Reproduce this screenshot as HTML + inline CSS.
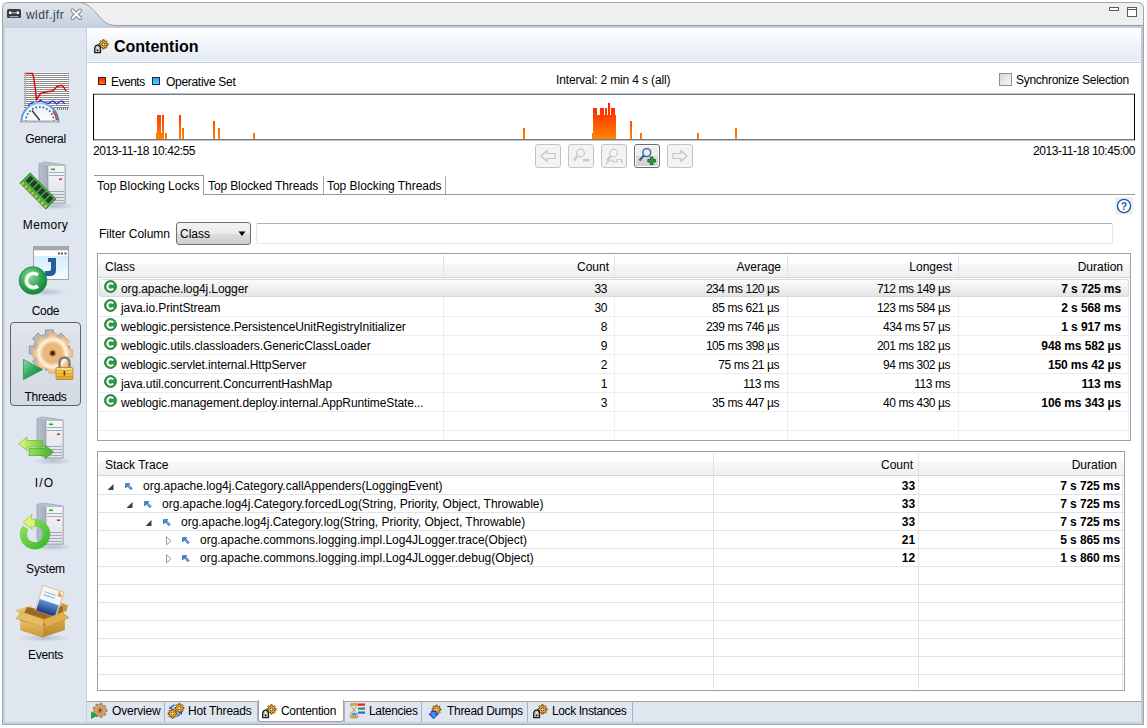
<!DOCTYPE html>
<html><head><meta charset="utf-8">
<style>
*{box-sizing:border-box}
html,body{margin:0;padding:0}
body{width:1147px;height:728px;overflow:hidden;background:#fff;position:relative;font-family:"Liberation Sans",sans-serif;font-size:12px;color:#000}
.a{position:absolute}
.t{position:absolute;white-space:nowrap;line-height:14px;font-size:12px}
.r{text-align:right}
.n{letter-spacing:-0.45px}
.b{font-weight:bold}
.hl{position:absolute;height:1px}
.vl{position:absolute;width:1px}
</style></head><body>

<!-- ============ FRAME TOP ============ -->
<svg class="a" style="left:0;top:0" width="1147" height="30">
  <defs>
    <linearGradient id="tabg" x1="0" y1="0" x2="0" y2="1">
      <stop offset="0" stop-color="#dfe6ee"/><stop offset="0.5" stop-color="#d0dae5"/><stop offset="1" stop-color="#c2cfdc"/>
    </linearGradient>
  </defs>
  <rect x="2" y="2" width="8" height="8" fill="#ececec"/><rect x="1137" y="2" width="7" height="8" fill="#ececec"/>
  <path d="M2.5,30 V9 Q2.5,2.5 9,2.5 H1137 Q1143.5,2.5 1143.5,9 V30" fill="#efefef" stroke="#a3a3a3" stroke-width="1"/>
  <path d="M3,30 V9 Q3,3 9,3 H78 C88,3 92,9 98,15 C104,22 108,25.5 116,25.5 H1143 V30 Z" fill="url(#tabg)"/>
  <path d="M78,2.5 C88,2.5 92,9 98,15 C104,22 108,25.5 116,25.5 H1143" fill="none" stroke="#9c9c9c" stroke-width="1"/>
  <rect x="3" y="26" width="1140" height="2" fill="#c3d1e1"/>
  <rect x="116" y="26" width="1027" height="2" fill="#bccbdd"/>
  <!-- cassette icon -->
  <rect x="7" y="9" width="14" height="9" rx="1.5" fill="#3b3b3b"/>
  <rect x="9" y="11.5" width="2.5" height="2.5" fill="#fff"/>
  <rect x="16.5" y="11.5" width="2.5" height="2.5" fill="#fff"/>
  <rect x="12" y="12" width="4" height="1.5" fill="#999"/>
  <rect x="9.5" y="16" width="9" height="1.2" fill="#aaa"/>
  <!-- close X -->
  <path d="M72.5,10.5 L80,18 M80,10.5 L72.5,18" stroke="#7c7c7c" stroke-width="4" stroke-linecap="round"/>
  <path d="M72.5,10.5 L80,18 M80,10.5 L72.5,18" stroke="#ffffff" stroke-width="2.2" stroke-linecap="round"/>
  <!-- min / max -->
  <rect x="1109.5" y="7.5" width="9" height="3" fill="#fff" stroke="#5a5a5a" stroke-width="1"/>
  <rect x="1127.5" y="7.5" width="9" height="9" fill="#fff" stroke="#5a5a5a" stroke-width="1"/>
  <rect x="1128" y="9" width="8" height="1" fill="#5a5a5a"/>
</svg>
<div class="t" style="left:26px;top:8px;color:#3a3f46;letter-spacing:0.45px">wldf.jfr</div>

<!-- side frame + bottom -->
<div class="a" style="left:2px;top:28px;width:1px;height:697px;background:#a3a3a3"></div>
<div class="a" style="left:1143px;top:28px;width:1px;height:697px;background:#a3a3a3"></div>
<div class="a" style="left:2px;top:724px;width:1142px;height:1px;background:#a3a3a3"></div>
<div class="a" style="left:3px;top:28px;width:2px;height:696px;background:#c3d1e1"></div>
<div class="a" style="left:1141px;top:28px;width:2px;height:696px;background:#bccbdd"></div>
<div class="a" style="left:3px;top:722px;width:1140px;height:2px;background:#c3d1e1"></div>

<!-- sidebar -->
<div class="a" style="left:5px;top:28px;width:81px;height:694px;background:#dfe6f0"></div>
<div class="a" style="left:86px;top:28px;width:1px;height:694px;background:#c3d1e1"></div>

<!-- header -->
<div class="a" style="left:87px;top:28px;width:1054px;height:33px;background:linear-gradient(#ffffff,#e3eaf3)"></div>
<div class="a" style="left:87px;top:61px;width:1054px;height:1px;background:#f4f7fa"></div>
<div class="a" style="left:87px;top:62px;width:1054px;height:1px;background:#bfcfe0"></div>
<div class="t b" style="left:114px;top:38px;font-size:16px;line-height:18px;letter-spacing:0px">Contention</div>

<svg class="a" style="left:93px;top:38px" width="16" height="16" viewBox="0 0 16 16">
<path d="M13.70,5.58 L15.14,5.66 L15.14,7.14 L13.70,7.22 L13.34,8.08 L14.30,9.16 L13.26,10.20 L12.18,9.24 L11.32,9.60 L11.24,11.04 L9.76,11.04 L9.68,9.60 L8.82,9.24 L7.74,10.20 L6.70,9.16 L7.66,8.08 L7.30,7.22 L5.86,7.14 L5.86,5.66 L7.30,5.58 L7.66,4.72 L6.70,3.64 L7.74,2.60 L8.82,3.56 L9.68,3.20 L9.76,1.76 L11.24,1.76 L11.32,3.20 L12.18,3.56 L13.26,2.60 L14.30,3.64 L13.34,4.72 Z" fill="#f6b81e" stroke="#6a3c12" stroke-width="0.9"/>
<circle cx="10.5" cy="6.4" r="1.5" fill="#fff" stroke="#3a2a1a" stroke-width="0.9"/>
<path d="M1.7,14.6 V11 Q1.7,7.2 4.6,7.2 Q7.5,7.2 7.5,11 V14.6 Z" fill="#c4c4c4" stroke="#1e1e1e" stroke-width="1.3"/>
<path d="M4.6,8.6 L5.6,10.4 H3.6 Z" fill="#fff"/>
<circle cx="4.6" cy="12.3" r="0.9" fill="#111"/>
</svg>
<div class="a" style="left:98px;top:77px;width:8px;height:8px;background:linear-gradient(#ff2200,#ff7a00);border:1px solid #3a1a10"></div>
<div class="t " style="left:111px;top:75px;letter-spacing:-0.5px">Events</div>
<div class="a" style="left:152px;top:77px;width:8px;height:8px;background:linear-gradient(#3aa0ff,#40d8ff);border:1px solid #1a2a40"></div>
<div class="t " style="left:166px;top:75px;letter-spacing:-0.3px">Operative Set</div>
<div class="t " style="left:556px;top:73px;letter-spacing:-0.15px">Interval: 2 min 4 s (all)</div>
<div class="a" style="left:999px;top:73px;width:13px;height:13px;border:1px solid #8f8f8f;background:linear-gradient(135deg,#d4d8de,#f6f6f6)"></div>
<div class="t " style="left:1016px;top:73px;letter-spacing:-0.28px">Synchronize Selection</div>
<div class="a" style="left:93px;top:94px;width:1042px;height:46px;background:#fff"></div>
<div class="a" style="left:93px;top:93px;width:1042px;height:1px;background:#b4c0cd"></div>
<div class="a" style="left:93px;top:94px;width:1042px;height:1px;background:#7a7a7a"></div>
<div class="a" style="left:93px;top:94px;width:1px;height:46px;background:#000"></div>
<div class="a" style="left:1134px;top:94px;width:1px;height:46px;background:#000"></div>
<div class="a" style="left:0;top:0;width:1147px;height:728px">
<div class="a" style="left:156px;top:133px;width:8px;height:6px;background:linear-gradient(to bottom,#ff1a00 0px,#ff8400 36px);background-size:100% 36px;background-position:0 -30px"></div>
<div class="a" style="left:157px;top:115px;width:4px;height:24px;background:linear-gradient(to bottom,#ff1a00 0px,#ff8400 36px);background-size:100% 36px;background-position:0 -12px"></div>
<div class="a" style="left:162px;top:115px;width:2px;height:24px;background:linear-gradient(to bottom,#ff1a00 0px,#ff8400 36px);background-size:100% 36px;background-position:0 -12px"></div>
<div class="a" style="left:165px;top:133px;width:2px;height:6px;background:linear-gradient(to bottom,#ff1a00 0px,#ff8400 36px);background-size:100% 36px;background-position:0 -30px"></div>
<div class="a" style="left:179px;top:115px;width:2px;height:24px;background:linear-gradient(to bottom,#ff1a00 0px,#ff8400 36px);background-size:100% 36px;background-position:0 -12px"></div>
<div class="a" style="left:182px;top:128px;width:2px;height:11px;background:linear-gradient(to bottom,#ff1a00 0px,#ff8400 36px);background-size:100% 36px;background-position:0 -25px"></div>
<div class="a" style="left:213px;top:121px;width:2px;height:18px;background:linear-gradient(to bottom,#ff1a00 0px,#ff8400 36px);background-size:100% 36px;background-position:0 -18px"></div>
<div class="a" style="left:218px;top:128px;width:2px;height:11px;background:linear-gradient(to bottom,#ff1a00 0px,#ff8400 36px);background-size:100% 36px;background-position:0 -25px"></div>
<div class="a" style="left:253px;top:133px;width:2px;height:6px;background:linear-gradient(to bottom,#ff1a00 0px,#ff8400 36px);background-size:100% 36px;background-position:0 -30px"></div>
<div class="a" style="left:523px;top:128px;width:2px;height:11px;background:linear-gradient(to bottom,#ff1a00 0px,#ff8400 36px);background-size:100% 36px;background-position:0 -25px"></div>
<div class="a" style="left:592px;top:133px;width:1px;height:6px;background:linear-gradient(to bottom,#ff1a00 0px,#ff8400 36px);background-size:100% 36px;background-position:0 -30px"></div>
<div class="a" style="left:593px;top:115px;width:23px;height:24px;background:linear-gradient(to bottom,#ff1a00 0px,#ff8400 36px);background-size:100% 36px;background-position:0 -12px"></div>
<div class="a" style="left:593px;top:108px;width:4px;height:31px;background:linear-gradient(to bottom,#ff1a00 0px,#ff8400 36px);background-size:100% 36px;background-position:0 -5px"></div>
<div class="a" style="left:600px;top:108px;width:4px;height:31px;background:linear-gradient(to bottom,#ff1a00 0px,#ff8400 36px);background-size:100% 36px;background-position:0 -5px"></div>
<div class="a" style="left:605px;top:108px;width:2px;height:31px;background:linear-gradient(to bottom,#ff1a00 0px,#ff8400 36px);background-size:100% 36px;background-position:0 -5px"></div>
<div class="a" style="left:608px;top:103px;width:2px;height:36px;background:linear-gradient(to bottom,#ff1a00 0px,#ff8400 36px);background-size:100% 36px;background-position:0 0px"></div>
<div class="a" style="left:611px;top:108px;width:4px;height:31px;background:linear-gradient(to bottom,#ff1a00 0px,#ff8400 36px);background-size:100% 36px;background-position:0 -5px"></div>
<div class="a" style="left:630px;top:121px;width:2px;height:18px;background:linear-gradient(to bottom,#ff1a00 0px,#ff8400 36px);background-size:100% 36px;background-position:0 -18px"></div>
<div class="a" style="left:640px;top:133px;width:2px;height:6px;background:linear-gradient(to bottom,#ff1a00 0px,#ff8400 36px);background-size:100% 36px;background-position:0 -30px"></div>
<div class="a" style="left:697px;top:133px;width:2px;height:6px;background:linear-gradient(to bottom,#ff1a00 0px,#ff8400 36px);background-size:100% 36px;background-position:0 -30px"></div>
<div class="a" style="left:735px;top:128px;width:2px;height:11px;background:linear-gradient(to bottom,#ff1a00 0px,#ff8400 36px);background-size:100% 36px;background-position:0 -25px"></div>
</div>
<div class="a" style="left:94px;top:139px;width:1040px;height:1px;background:#7a7a7a"></div>
<div class="a" style="left:93px;top:140px;width:1042px;height:1px;background:#b9c2cc"></div>
<div class="t " style="left:93px;top:144px;letter-spacing:-0.45px">2013-11-18 10:42:55</div>
<div class="t r " style="left:735px;width:400px;top:144px;letter-spacing:-0.45px">2013-11-18 10:45:00</div>
<div class="a" style="left:535px;top:144px;width:26px;height:24px;border:1px solid #bfc4ca;border-radius:3px;background:#f3f3f3"></div>
<div class="a" style="left:568px;top:144px;width:26px;height:24px;border:1px solid #bfc4ca;border-radius:3px;background:#f3f3f3"></div>
<div class="a" style="left:601px;top:144px;width:26px;height:24px;border:1px solid #bfc4ca;border-radius:3px;background:#f3f3f3"></div>
<div class="a" style="left:634px;top:144px;width:26px;height:24px;border:1px solid #6b6b6b;border-radius:3px;background:linear-gradient(#f2f2f2 0,#ebebeb 50%,#d9d9d9 51%,#d0d0d0 100%);box-shadow:inset 0 0 0 1px #fff"></div>
<div class="a" style="left:667px;top:144px;width:26px;height:24px;border:1px solid #bfc4ca;border-radius:3px;background:#f3f3f3"></div>
<svg class="a" style="left:535px;top:144px" width="160" height="24">
<path d="M6,12 L12,6.5 V9.5 H20 V14.5 H12 V17.5 Z" fill="none" stroke="#c4c4c4" stroke-width="1.2"/>
<g transform="translate(33,0)"><circle cx="12.6" cy="9" r="3.8" fill="none" stroke="#c8c8c8" stroke-width="1.2"/><path d="M9.8,11.8 L6,16.5" stroke="#c8c8c8" stroke-width="2.2"/><rect x="15" y="15" width="6.5" height="2.5" fill="#c8c8c8"/></g>
<g transform="translate(66,0)"><circle cx="12.6" cy="9" r="3.8" fill="none" stroke="#c8c8c8" stroke-width="1.2"/><path d="M9.8,11.8 L6,16.5" stroke="#c8c8c8" stroke-width="2.2"/><path d="M5,20 L9,16 H12 V18 H16 V15.5 H20.5 V17.5 L22,19" fill="none" stroke="#c8c8c8" stroke-width="1.2"/></g>
<g transform="translate(99,0)"><circle cx="12.8" cy="8.6" r="4" fill="#e4eefa" stroke="#3a5f96" stroke-width="1.4"/><path d="M9.8,11.6 L5.5,16.5" stroke="#3a5f96" stroke-width="2.2"/><path d="M16.3,13 H19 V15.5 H21.5 V18 H19 V20.5 H16.3 V18 H13.8 V15.5 H16.3 Z" fill="#2aa038" stroke="#0e5a18" stroke-width="0.8"/></g>
<g transform="translate(132,0)"><path d="M20,12 L14,6.5 V9.5 H6 V14.5 H14 V17.5 Z" fill="none" stroke="#c4c4c4" stroke-width="1.2"/></g>
</svg>
<div class="a" style="left:94px;top:175px;width:109px;height:1px;background:#9a9a9a"></div>
<div class="a" style="left:203px;top:175px;width:1px;height:20px;background:#9a9a9a"></div>
<div class="a" style="left:93px;top:176px;width:110px;height:19px;background:#fff"></div>
<div class="a" style="left:323px;top:176px;width:1px;height:18px;background:#a8a8a8"></div>
<div class="a" style="left:445px;top:176px;width:1px;height:18px;background:#a8a8a8"></div>
<div class="a" style="left:203px;top:194px;width:932px;height:1px;background:#9a9a9a"></div>
<div class="t " style="left:97px;top:179px;letter-spacing:-0.02px">Top Blocking Locks</div>
<div class="t " style="left:208px;top:179px;letter-spacing:-0.12px">Top Blocked Threads</div>
<div class="t " style="left:327px;top:179px;letter-spacing:-0.03px">Top Blocking Threads</div>
<div class="a" style="left:1115px;top:197px;width:18px;height:18px;background:#efefef"></div>
<svg class="a" style="left:1115px;top:197px" width="18" height="18"><circle cx="9" cy="9" r="6.6" fill="#fff" stroke="#1f5aa0" stroke-width="1.4"/>
<text x="9" y="13" text-anchor="middle" font-family="Liberation Sans" font-weight="bold" font-size="10.5" fill="#1f5aa0">?</text></svg>
<div class="t " style="left:99px;top:227px;letter-spacing:-0.03px">Filter Column</div>
<div class="a" style="left:176px;top:222px;width:75px;height:23px;border:1px solid #707070;border-radius:3px;background:linear-gradient(#f3f3f3 0,#ebebeb 50%,#dddddd 51%,#cfcfcf 100%)"></div>
<div class="t " style="left:180px;top:227px;">Class</div>
<svg class="a" style="left:236px;top:230px" width="12" height="8"><path d="M2.5,1.5 H9.5 L6,6 Z" fill="#000"/></svg>
<div class="a" style="left:256px;top:223px;width:857px;height:21px;border:1px solid #e2e8ef;border-top-color:#a9b1b9;border-radius:2px;background:#fff"></div>
<div class="a" style="left:97px;top:253px;width:1034px;height:188px;border:1px solid #9aa1a9;background:#fff"></div>
<div class="a" style="left:98px;top:254px;width:1032px;height:23px;background:linear-gradient(#ffffff 0,#ffffff 40%,#f6f7f8 45%,#eef0f2 100%)"></div>
<div class="a" style="left:98px;top:277px;width:1032px;height:1px;background:#d5d5d5"></div>
<div class="a" style="left:443px;top:255px;width:1px;height:21px;background:#e2e3e4"></div>
<div class="a" style="left:443px;top:278px;width:1px;height:161px;background:#ebeff4"></div>
<div class="a" style="left:614px;top:255px;width:1px;height:21px;background:#e2e3e4"></div>
<div class="a" style="left:614px;top:278px;width:1px;height:161px;background:#ebeff4"></div>
<div class="a" style="left:787px;top:255px;width:1px;height:21px;background:#e2e3e4"></div>
<div class="a" style="left:787px;top:278px;width:1px;height:161px;background:#ebeff4"></div>
<div class="a" style="left:958px;top:255px;width:1px;height:21px;background:#e2e3e4"></div>
<div class="a" style="left:958px;top:278px;width:1px;height:161px;background:#ebeff4"></div>
<div class="a" style="left:1128px;top:278px;width:1px;height:161px;background:#ebeff4"></div>
<div class="a" style="left:98px;top:316px;width:1032px;height:1px;background:#ededed"></div>
<div class="a" style="left:98px;top:335px;width:1032px;height:1px;background:#ededed"></div>
<div class="a" style="left:98px;top:354px;width:1032px;height:1px;background:#ededed"></div>
<div class="a" style="left:98px;top:373px;width:1032px;height:1px;background:#ededed"></div>
<div class="a" style="left:98px;top:392px;width:1032px;height:1px;background:#ededed"></div>
<div class="a" style="left:98px;top:411px;width:1032px;height:1px;background:#ededed"></div>
<div class="a" style="left:98px;top:430px;width:1032px;height:1px;background:#ededed"></div>
<div class="a" style="left:99px;top:279px;width:1030px;height:18px;border:1px solid #d9d9d9;border-radius:3px;background:linear-gradient(#fbfbfb,#e5e5e5)"></div>
<div class="t " style="left:105px;top:260px;">Class</div>
<div class="t r " style="left:209px;width:400px;top:260px;">Count</div>
<div class="t r " style="left:381px;width:400px;top:260px;">Average</div>
<div class="t r " style="left:552px;width:400px;top:260px;">Longest</div>
<div class="t r " style="left:723px;width:400px;top:260px;">Duration</div>
<svg class="a" style="left:104px;top:280px" width="13" height="13"><circle cx="6.5" cy="6.5" r="6" fill="#2e9a48" stroke="#1d6e32" stroke-width="0.8"/>
<path d="M9.2,4.3 A3.3,3.3 0 1 0 9.2,8.7" fill="none" stroke="#fff" stroke-width="2"/></svg>
<div class="t " style="left:121px;top:282px;letter-spacing:-0.1px">org.apache.log4j.Logger</div>
<div class="t r n" style="left:207px;width:400px;top:282px;">33</div>
<div class="t r n" style="left:379px;width:400px;top:282px;">234 ms 120 µs</div>
<div class="t r n" style="left:550px;width:400px;top:282px;">712 ms 149 µs</div>
<div class="t r b" style="left:721px;width:400px;top:282px;letter-spacing:-0.1px">7 s 725 ms</div>
<svg class="a" style="left:104px;top:299px" width="13" height="13"><circle cx="6.5" cy="6.5" r="6" fill="#2e9a48" stroke="#1d6e32" stroke-width="0.8"/>
<path d="M9.2,4.3 A3.3,3.3 0 1 0 9.2,8.7" fill="none" stroke="#fff" stroke-width="2"/></svg>
<div class="t " style="left:121px;top:301px;letter-spacing:-0.1px">java.io.PrintStream</div>
<div class="t r n" style="left:207px;width:400px;top:301px;">30</div>
<div class="t r n" style="left:379px;width:400px;top:301px;">85 ms 621 µs</div>
<div class="t r n" style="left:550px;width:400px;top:301px;">123 ms 584 µs</div>
<div class="t r b" style="left:721px;width:400px;top:301px;letter-spacing:-0.1px">2 s 568 ms</div>
<svg class="a" style="left:104px;top:318px" width="13" height="13"><circle cx="6.5" cy="6.5" r="6" fill="#2e9a48" stroke="#1d6e32" stroke-width="0.8"/>
<path d="M9.2,4.3 A3.3,3.3 0 1 0 9.2,8.7" fill="none" stroke="#fff" stroke-width="2"/></svg>
<div class="t " style="left:121px;top:320px;letter-spacing:-0.1px">weblogic.persistence.PersistenceUnitRegistryInitializer</div>
<div class="t r n" style="left:207px;width:400px;top:320px;">8</div>
<div class="t r n" style="left:379px;width:400px;top:320px;">239 ms 746 µs</div>
<div class="t r n" style="left:550px;width:400px;top:320px;">434 ms 57 µs</div>
<div class="t r b" style="left:721px;width:400px;top:320px;letter-spacing:-0.1px">1 s 917 ms</div>
<svg class="a" style="left:104px;top:337px" width="13" height="13"><circle cx="6.5" cy="6.5" r="6" fill="#2e9a48" stroke="#1d6e32" stroke-width="0.8"/>
<path d="M9.2,4.3 A3.3,3.3 0 1 0 9.2,8.7" fill="none" stroke="#fff" stroke-width="2"/></svg>
<div class="t " style="left:121px;top:339px;letter-spacing:-0.1px">weblogic.utils.classloaders.GenericClassLoader</div>
<div class="t r n" style="left:207px;width:400px;top:339px;">9</div>
<div class="t r n" style="left:379px;width:400px;top:339px;">105 ms 398 µs</div>
<div class="t r n" style="left:550px;width:400px;top:339px;">201 ms 182 µs</div>
<div class="t r b" style="left:721px;width:400px;top:339px;letter-spacing:-0.1px">948 ms 582 µs</div>
<svg class="a" style="left:104px;top:356px" width="13" height="13"><circle cx="6.5" cy="6.5" r="6" fill="#2e9a48" stroke="#1d6e32" stroke-width="0.8"/>
<path d="M9.2,4.3 A3.3,3.3 0 1 0 9.2,8.7" fill="none" stroke="#fff" stroke-width="2"/></svg>
<div class="t " style="left:121px;top:358px;letter-spacing:-0.1px">weblogic.servlet.internal.HttpServer</div>
<div class="t r n" style="left:207px;width:400px;top:358px;">2</div>
<div class="t r n" style="left:379px;width:400px;top:358px;">75 ms 21 µs</div>
<div class="t r n" style="left:550px;width:400px;top:358px;">94 ms 302 µs</div>
<div class="t r b" style="left:721px;width:400px;top:358px;letter-spacing:-0.1px">150 ms 42 µs</div>
<svg class="a" style="left:104px;top:375px" width="13" height="13"><circle cx="6.5" cy="6.5" r="6" fill="#2e9a48" stroke="#1d6e32" stroke-width="0.8"/>
<path d="M9.2,4.3 A3.3,3.3 0 1 0 9.2,8.7" fill="none" stroke="#fff" stroke-width="2"/></svg>
<div class="t " style="left:121px;top:377px;letter-spacing:-0.1px">java.util.concurrent.ConcurrentHashMap</div>
<div class="t r n" style="left:207px;width:400px;top:377px;">1</div>
<div class="t r n" style="left:379px;width:400px;top:377px;">113 ms</div>
<div class="t r n" style="left:550px;width:400px;top:377px;">113 ms</div>
<div class="t r b" style="left:721px;width:400px;top:377px;letter-spacing:-0.1px">113 ms</div>
<svg class="a" style="left:104px;top:394px" width="13" height="13"><circle cx="6.5" cy="6.5" r="6" fill="#2e9a48" stroke="#1d6e32" stroke-width="0.8"/>
<path d="M9.2,4.3 A3.3,3.3 0 1 0 9.2,8.7" fill="none" stroke="#fff" stroke-width="2"/></svg>
<div class="t " style="left:121px;top:396px;letter-spacing:-0.1px">weblogic.management.deploy.internal.AppRuntimeState...</div>
<div class="t r n" style="left:207px;width:400px;top:396px;">3</div>
<div class="t r n" style="left:379px;width:400px;top:396px;">35 ms 447 µs</div>
<div class="t r n" style="left:550px;width:400px;top:396px;">40 ms 430 µs</div>
<div class="t r b" style="left:721px;width:400px;top:396px;letter-spacing:-0.1px">106 ms 343 µs</div>
<div class="a" style="left:97px;top:451px;width:1028px;height:240px;border:1px solid #9aa1a9;background:#fff"></div>
<div class="a" style="left:98px;top:452px;width:1026px;height:23px;background:linear-gradient(#ffffff 0,#ffffff 40%,#f6f7f8 45%,#eef0f2 100%)"></div>
<div class="a" style="left:98px;top:475px;width:1026px;height:1px;background:#d5d5d5"></div>
<div class="a" style="left:713px;top:453px;width:1px;height:21px;background:#e2e3e4"></div>
<div class="a" style="left:713px;top:476px;width:1px;height:213px;background:#e3e3e3"></div>
<div class="a" style="left:918px;top:453px;width:1px;height:21px;background:#e2e3e4"></div>
<div class="a" style="left:918px;top:476px;width:1px;height:213px;background:#e3e3e3"></div>
<div class="a" style="left:1122px;top:476px;width:1px;height:213px;background:#e3e3e3"></div>
<div class="a" style="left:98px;top:494px;width:1026px;height:1px;background:#e3e3e3"></div>
<div class="a" style="left:98px;top:512px;width:1026px;height:1px;background:#e3e3e3"></div>
<div class="a" style="left:98px;top:530px;width:1026px;height:1px;background:#e3e3e3"></div>
<div class="a" style="left:98px;top:548px;width:1026px;height:1px;background:#e3e3e3"></div>
<div class="a" style="left:98px;top:566px;width:1026px;height:1px;background:#e3e3e3"></div>
<div class="a" style="left:98px;top:584px;width:1026px;height:1px;background:#e3e3e3"></div>
<div class="a" style="left:98px;top:602px;width:1026px;height:1px;background:#e3e3e3"></div>
<div class="a" style="left:98px;top:620px;width:1026px;height:1px;background:#e3e3e3"></div>
<div class="a" style="left:98px;top:638px;width:1026px;height:1px;background:#e3e3e3"></div>
<div class="a" style="left:98px;top:656px;width:1026px;height:1px;background:#e3e3e3"></div>
<div class="a" style="left:98px;top:674px;width:1026px;height:1px;background:#e3e3e3"></div>
<div class="t " style="left:105px;top:458px;">Stack Trace</div>
<div class="t r " style="left:513px;width:400px;top:458px;">Count</div>
<div class="t r " style="left:717px;width:400px;top:458px;">Duration</div>
<svg class="a" style="left:107px;top:483px" width="8" height="8"><path d="M6.5,1 V7 H0.5 Z" fill="#404040"/></svg>
<svg class="a" style="left:124px;top:482px" width="10" height="10"><path d="M1.5,1.5 H6 L4.7,2.8 L8.3,6.4 L6.9,7.8 L3.3,4.2 L1.5,6 Z" fill="#3f86cf" stroke="#1d5aa0" stroke-width="0.6"/><path d="M4.3,3.9 L7,6.6" stroke="#d0e2f4" stroke-width="0.8"/></svg>
<div class="t " style="left:143px;top:479px;letter-spacing:-0.02px">org.apache.log4j.Category.callAppenders(LoggingEvent)</div>
<div class="t r b" style="left:515px;width:400px;top:479px;letter-spacing:-0.1px">33</div>
<div class="t r b" style="left:720px;width:400px;top:479px;letter-spacing:-0.1px">7 s 725 ms</div>
<svg class="a" style="left:126px;top:501px" width="8" height="8"><path d="M6.5,1 V7 H0.5 Z" fill="#404040"/></svg>
<svg class="a" style="left:143px;top:500px" width="10" height="10"><path d="M1.5,1.5 H6 L4.7,2.8 L8.3,6.4 L6.9,7.8 L3.3,4.2 L1.5,6 Z" fill="#3f86cf" stroke="#1d5aa0" stroke-width="0.6"/><path d="M4.3,3.9 L7,6.6" stroke="#d0e2f4" stroke-width="0.8"/></svg>
<div class="t " style="left:162px;top:497px;letter-spacing:-0.02px">org.apache.log4j.Category.forcedLog(String, Priority, Object, Throwable)</div>
<div class="t r b" style="left:515px;width:400px;top:497px;letter-spacing:-0.1px">33</div>
<div class="t r b" style="left:720px;width:400px;top:497px;letter-spacing:-0.1px">7 s 725 ms</div>
<svg class="a" style="left:145px;top:519px" width="8" height="8"><path d="M6.5,1 V7 H0.5 Z" fill="#404040"/></svg>
<svg class="a" style="left:162px;top:518px" width="10" height="10"><path d="M1.5,1.5 H6 L4.7,2.8 L8.3,6.4 L6.9,7.8 L3.3,4.2 L1.5,6 Z" fill="#3f86cf" stroke="#1d5aa0" stroke-width="0.6"/><path d="M4.3,3.9 L7,6.6" stroke="#d0e2f4" stroke-width="0.8"/></svg>
<div class="t " style="left:181px;top:515px;letter-spacing:-0.02px">org.apache.log4j.Category.log(String, Priority, Object, Throwable)</div>
<div class="t r b" style="left:515px;width:400px;top:515px;letter-spacing:-0.1px">33</div>
<div class="t r b" style="left:720px;width:400px;top:515px;letter-spacing:-0.1px">7 s 725 ms</div>
<svg class="a" style="left:164px;top:535px" width="10" height="11"><path d="M2.5,1.8 L7,5.8 L2.5,9.8 Z" fill="none" stroke="#9a9a9a" stroke-width="1"/></svg>
<svg class="a" style="left:181px;top:536px" width="10" height="10"><path d="M1.5,1.5 H6 L4.7,2.8 L8.3,6.4 L6.9,7.8 L3.3,4.2 L1.5,6 Z" fill="#3f86cf" stroke="#1d5aa0" stroke-width="0.6"/><path d="M4.3,3.9 L7,6.6" stroke="#d0e2f4" stroke-width="0.8"/></svg>
<div class="t " style="left:200px;top:533px;letter-spacing:-0.02px">org.apache.commons.logging.impl.Log4JLogger.trace(Object)</div>
<div class="t r b" style="left:515px;width:400px;top:533px;letter-spacing:-0.1px">21</div>
<div class="t r b" style="left:720px;width:400px;top:533px;letter-spacing:-0.1px">5 s 865 ms</div>
<svg class="a" style="left:164px;top:553px" width="10" height="11"><path d="M2.5,1.8 L7,5.8 L2.5,9.8 Z" fill="none" stroke="#9a9a9a" stroke-width="1"/></svg>
<svg class="a" style="left:181px;top:554px" width="10" height="10"><path d="M1.5,1.5 H6 L4.7,2.8 L8.3,6.4 L6.9,7.8 L3.3,4.2 L1.5,6 Z" fill="#3f86cf" stroke="#1d5aa0" stroke-width="0.6"/><path d="M4.3,3.9 L7,6.6" stroke="#d0e2f4" stroke-width="0.8"/></svg>
<div class="t " style="left:200px;top:551px;letter-spacing:-0.02px">org.apache.commons.logging.impl.Log4JLogger.debug(Object)</div>
<div class="t r b" style="left:515px;width:400px;top:551px;letter-spacing:-0.1px">12</div>
<div class="t r b" style="left:720px;width:400px;top:551px;letter-spacing:-0.1px">1 s 860 ms</div>
<div class="a" style="left:87px;top:701px;width:1054px;height:1px;background:#a3a3a3"></div>
<div class="a" style="left:87px;top:702px;width:1054px;height:20px;background:#dfe6f0"></div>
<div class="a" style="left:164px;top:701px;width:1px;height:21px;background:#a9b3be"></div>
<div class="a" style="left:257px;top:701px;width:1px;height:21px;background:#a9b3be"></div>
<div class="a" style="left:344px;top:701px;width:1px;height:21px;background:#a9b3be"></div>
<div class="a" style="left:421px;top:701px;width:1px;height:21px;background:#a9b3be"></div>
<div class="a" style="left:527px;top:701px;width:1px;height:21px;background:#a9b3be"></div>
<div class="a" style="left:632px;top:701px;width:1px;height:21px;background:#a9b3be"></div>
<div class="a" style="left:258px;top:700px;width:86px;height:22px;background:#fff;border:1px solid #a3a3a3;border-top:none;border-radius:0 0 3px 3px"></div>
<div class="t " style="left:112px;top:704px;letter-spacing:-0.2px">Overview</div>
<div class="t " style="left:188px;top:704px;letter-spacing:-0.2px">Hot Threads</div>
<div class="t " style="left:281px;top:704px;letter-spacing:-0.3px">Contention</div>
<div class="t " style="left:369px;top:704px;letter-spacing:-0.3px">Latencies</div>
<div class="t " style="left:447px;top:704px;letter-spacing:-0.3px">Thread Dumps</div>
<div class="t " style="left:552px;top:704px;letter-spacing:-0.4px">Lock Instances</div>
<svg class="a" style="left:261px;top:703px" width="16" height="16" viewBox="0 0 16 16">
<path d="M13.70,5.58 L15.14,5.66 L15.14,7.14 L13.70,7.22 L13.34,8.08 L14.30,9.16 L13.26,10.20 L12.18,9.24 L11.32,9.60 L11.24,11.04 L9.76,11.04 L9.68,9.60 L8.82,9.24 L7.74,10.20 L6.70,9.16 L7.66,8.08 L7.30,7.22 L5.86,7.14 L5.86,5.66 L7.30,5.58 L7.66,4.72 L6.70,3.64 L7.74,2.60 L8.82,3.56 L9.68,3.20 L9.76,1.76 L11.24,1.76 L11.32,3.20 L12.18,3.56 L13.26,2.60 L14.30,3.64 L13.34,4.72 Z" fill="#f6b81e" stroke="#6a3c12" stroke-width="0.9"/>
<circle cx="10.5" cy="6.4" r="1.5" fill="#fff" stroke="#3a2a1a" stroke-width="0.9"/>
<path d="M1.7,14.6 V11 Q1.7,7.2 4.6,7.2 Q7.5,7.2 7.5,11 V14.6 Z" fill="#c4c4c4" stroke="#1e1e1e" stroke-width="1.3"/>
<path d="M4.6,8.6 L5.6,10.4 H3.6 Z" fill="#fff"/>
<circle cx="4.6" cy="12.3" r="0.9" fill="#111"/>
</svg>
<svg class="a" style="left:532px;top:703px" width="16" height="16" viewBox="0 0 16 16">
<path d="M13.70,5.58 L15.14,5.66 L15.14,7.14 L13.70,7.22 L13.34,8.08 L14.30,9.16 L13.26,10.20 L12.18,9.24 L11.32,9.60 L11.24,11.04 L9.76,11.04 L9.68,9.60 L8.82,9.24 L7.74,10.20 L6.70,9.16 L7.66,8.08 L7.30,7.22 L5.86,7.14 L5.86,5.66 L7.30,5.58 L7.66,4.72 L6.70,3.64 L7.74,2.60 L8.82,3.56 L9.68,3.20 L9.76,1.76 L11.24,1.76 L11.32,3.20 L12.18,3.56 L13.26,2.60 L14.30,3.64 L13.34,4.72 Z" fill="#f6b81e" stroke="#6a3c12" stroke-width="0.9"/>
<circle cx="10.5" cy="6.4" r="1.5" fill="#fff" stroke="#3a2a1a" stroke-width="0.9"/>
<path d="M1.7,14.6 V11 Q1.7,7.2 4.6,7.2 Q7.5,7.2 7.5,11 V14.6 Z" fill="#c4c4c4" stroke="#1e1e1e" stroke-width="1.3"/>
<path d="M4.6,8.6 L5.6,10.4 H3.6 Z" fill="#fff"/>
<circle cx="4.6" cy="12.3" r="0.9" fill="#111"/>
</svg>
<svg class="a" style="left:0;top:696px" width="460" height="28" viewBox="0 696 460 28"><path d="M105.27,709.20 L106.93,709.43 L106.93,711.37 L105.27,711.60 L104.80,712.87 L105.94,714.11 L104.68,715.60 L103.26,714.70 L102.09,715.38 L102.16,717.06 L100.24,717.40 L99.74,715.79 L98.40,715.56 L97.38,716.89 L95.69,715.92 L96.33,714.36 L95.46,713.33 L93.82,713.69 L93.15,711.86 L94.64,711.08 L94.64,709.72 L93.15,708.94 L93.82,707.11 L95.46,707.47 L96.33,706.44 L95.69,704.88 L97.38,703.91 L98.40,705.24 L99.74,705.01 L100.24,703.40 L102.16,703.74 L102.09,705.42 L103.26,706.10 L104.68,705.20 L105.94,706.69 L104.80,707.93 Z" fill="#e0a868" stroke="#8a6a50" stroke-width="0.9"/><circle cx="100" cy="710.4" r="3.2" fill="#c88848"/><circle cx="100" cy="710.4" r="1" fill="#3a2a1a"/><path d="M91,711.5 V719 L98.2,715.3 Z" fill="#2aa048"/><path d="M175.80,712.78 L177.14,712.88 L177.14,714.32 L175.80,714.42 L175.44,715.28 L176.32,716.30 L175.30,717.32 L174.28,716.44 L173.42,716.80 L173.32,718.14 L171.88,718.14 L171.78,716.80 L170.92,716.44 L169.90,717.32 L168.88,716.30 L169.76,715.28 L169.40,714.42 L168.06,714.32 L168.06,712.88 L169.40,712.78 L169.76,711.92 L168.88,710.90 L169.90,709.88 L170.92,710.76 L171.78,710.40 L171.88,709.06 L173.32,709.06 L173.42,710.40 L174.28,710.76 L175.30,709.88 L176.32,710.90 L175.44,711.92 Z" fill="#f6b81e" stroke="#6a3c12" stroke-width="0.9"/><circle cx="172.6" cy="713.6" r="1.52" fill="#fff" stroke="#6a3c12" stroke-width="0.8"/><path d="M182.60,707.38 L183.94,707.48 L183.94,708.92 L182.60,709.02 L182.24,709.88 L183.12,710.90 L182.10,711.92 L181.08,711.04 L180.22,711.40 L180.12,712.74 L178.68,712.74 L178.58,711.40 L177.72,711.04 L176.70,711.92 L175.68,710.90 L176.56,709.88 L176.20,709.02 L174.86,708.92 L174.86,707.48 L176.20,707.38 L176.56,706.52 L175.68,705.50 L176.70,704.48 L177.72,705.36 L178.58,705.00 L178.68,703.66 L180.12,703.66 L180.22,705.00 L181.08,705.36 L182.10,704.48 L183.12,705.50 L182.24,706.52 Z" fill="#f6b81e" stroke="#6a3c12" stroke-width="0.9"/><circle cx="179.4" cy="708.2" r="1.52" fill="#fff" stroke="#6a3c12" stroke-width="0.8"/><path d="M174.5,704.5 L171,707.5" stroke="#1a5ab0" stroke-width="1.1"/><path d="M169.5,706 L169.5,709 L172.5,709 Z" fill="#1a5ab0"/><path d="M177,716.5 L180.5,713.5" stroke="#1a5ab0" stroke-width="1.1"/><path d="M182,712 L182,715 L179,712 Z" fill="#1a5ab0"/><path d="M350,704.5 Q354,702 358,704.5 Q358,706 355,708 L354.5,711 Q358,713 358,716.5 Q354,719.5 350,716.5 Q350,713 353.5,711 L353,708 Q350,706 350,704.5 Z" fill="#dce8f0" stroke="#b08030" stroke-width="0.7"/><ellipse cx="354" cy="704.3" rx="4.2" ry="1.6" fill="#d4a050"/><ellipse cx="354" cy="717" rx="4.2" ry="1.6" fill="#d4a050"/><path d="M351.5,713.5 Q354,712 356.5,713.5 L356.5,715.5 H351.5 Z" fill="#3a9ad8"/><rect x="358" y="703.5" width="7" height="2.2" fill="#e82020"/><rect x="358" y="707.5" width="7" height="2.2" fill="#2a9a4a"/><rect x="358" y="711.5" width="7" height="2.2" fill="#4060e8"/><path d="M439.70,708.78 L440.94,708.90 L440.94,710.30 L439.70,710.42 L439.34,711.28 L440.14,712.25 L439.15,713.24 L438.18,712.44 L437.32,712.80 L437.20,714.04 L435.80,714.04 L435.68,712.80 L434.82,712.44 L433.85,713.24 L432.86,712.25 L433.66,711.28 L433.30,710.42 L432.06,710.30 L432.06,708.90 L433.30,708.78 L433.66,707.92 L432.86,706.95 L433.85,705.96 L434.82,706.76 L435.68,706.40 L435.80,705.16 L437.20,705.16 L437.32,706.40 L438.18,706.76 L439.15,705.96 L440.14,706.95 L439.34,707.92 Z" fill="#f6b81e" stroke="#6a3c12" stroke-width="0.9"/><circle cx="436.5" cy="709.6" r="1.49" fill="#fff" stroke="#6a3c12" stroke-width="0.8"/><path d="M431.2,711.5 H436 V714 H438.3 L433.6,718.8 L429,714 H431.2 Z" fill="#2a9ae0" stroke="#3a20e0" stroke-width="1"/></svg>
<div class="a" style="left:10px;top:322px;width:71px;height:84px;border:1px solid #5d636b;border-radius:4px;background:linear-gradient(#e3e7ed 0,#dde2e9 15%,#d4dae2 100%)"></div>
<div class="t" style="left:5px;width:81px;text-align:center;top:132px;letter-spacing:-0.3px">General</div>
<div class="t" style="left:5px;width:81px;text-align:center;top:218px;letter-spacing:0.35px">Memory</div>
<div class="t" style="left:5px;width:81px;text-align:center;top:304px;letter-spacing:-0.3px">Code</div>
<div class="t" style="left:5px;width:81px;text-align:center;top:390px;letter-spacing:-0.3px">Threads</div>
<div class="t" style="left:4px;width:81px;text-align:center;top:476px;letter-spacing:1.2px">I/O</div>
<div class="t" style="left:5px;width:81px;text-align:center;top:562px;letter-spacing:-0.2px">System</div>
<div class="t" style="left:5px;width:81px;text-align:center;top:648px;letter-spacing:-0.3px">Events</div>
<svg class="a" style="left:0;top:0" width="90" height="728" viewBox="0 0 90 728">
<defs>
<linearGradient id="gRim" x1="0" y1="0" x2="1" y2="0"><stop offset="0" stop-color="#4a90d0"/><stop offset="0.5" stop-color="#a8d4f4"/><stop offset="1" stop-color="#3a78c0"/></linearGradient>
<radialGradient id="gFace" cx="0.5" cy="0.9" r="0.9"><stop offset="0" stop-color="#ffffff"/><stop offset="1" stop-color="#dfeefa"/></radialGradient>
<linearGradient id="gSrvF" x1="0" y1="0" x2="0" y2="1"><stop offset="0" stop-color="#f4f5f8"/><stop offset="1" stop-color="#dfe2e8"/></linearGradient>
<linearGradient id="gSrvS" x1="0" y1="0" x2="1" y2="0"><stop offset="0" stop-color="#b8bfcc"/><stop offset="1" stop-color="#838b9c"/></linearGradient>
<radialGradient id="gBall" cx="0.4" cy="0.35" r="0.7"><stop offset="0" stop-color="#8fd8a8"/><stop offset="0.6" stop-color="#2aa456"/><stop offset="1" stop-color="#0f7a34"/></radialGradient>
<linearGradient id="gWin" x1="0" y1="0" x2="0" y2="1"><stop offset="0" stop-color="#c4e6fa"/><stop offset="1" stop-color="#f6fbff"/></linearGradient>
<radialGradient id="gGear" cx="0.5" cy="0.5" r="0.5"><stop offset="0" stop-color="#e2a860"/><stop offset="0.5" stop-color="#eec38a"/><stop offset="0.68" stop-color="#fff4e4"/><stop offset="0.8" stop-color="#f2d2a2"/><stop offset="1" stop-color="#e2b478"/></radialGradient>
<linearGradient id="gPlay" x1="0" y1="0" x2="1" y2="1"><stop offset="0" stop-color="#8fdaa8"/><stop offset="0.5" stop-color="#2ea85a"/><stop offset="1" stop-color="#137a38"/></linearGradient>
<linearGradient id="gLock" x1="0" y1="0" x2="0" y2="1"><stop offset="0" stop-color="#fbe27a"/><stop offset="1" stop-color="#e0a020"/></linearGradient>
<linearGradient id="gArrL" x1="0" y1="0" x2="1" y2="0"><stop offset="0" stop-color="#e6f77a"/><stop offset="1" stop-color="#6cc83a"/></linearGradient>
<linearGradient id="gArrR" x1="0" y1="0" x2="1" y2="0"><stop offset="0" stop-color="#a0e050"/><stop offset="1" stop-color="#40b030"/></linearGradient>
<linearGradient id="gRing" x1="0" y1="0" x2="1" y2="1"><stop offset="0" stop-color="#90e060"/><stop offset="1" stop-color="#3cb82c"/></linearGradient>
<linearGradient id="gBoxL" x1="0" y1="0" x2="0" y2="1"><stop offset="0" stop-color="#e8bd62"/><stop offset="1" stop-color="#c99436"/></linearGradient>
<linearGradient id="gBoxR" x1="0" y1="0" x2="0" y2="1"><stop offset="0" stop-color="#d9a848"/><stop offset="1" stop-color="#b8842a"/></linearGradient>
<linearGradient id="gPic" x1="0" y1="0" x2="0" y2="1"><stop offset="0" stop-color="#5a8ad0"/><stop offset="1" stop-color="#1a3a7a"/></linearGradient>
<radialGradient id="gShad" cx="0.5" cy="0.5" r="0.5"><stop offset="0" stop-color="#8090a8" stop-opacity="0.45"/><stop offset="1" stop-color="#8090a8" stop-opacity="0"/></radialGradient>
</defs>
<rect x="25" y="72.5" width="43" height="35" fill="#ffffff"/>
<rect x="24" y="73" width="45" height="1" fill="#8c8c8c"/>
<rect x="24" y="75" width="45" height="1" fill="#8c8c8c"/>
<rect x="24" y="77" width="45" height="1" fill="#8c8c8c"/>
<rect x="24" y="79" width="45" height="1" fill="#8c8c8c"/>
<rect x="24" y="81" width="45" height="1" fill="#8c8c8c"/>
<rect x="24" y="83" width="45" height="1" fill="#8c8c8c"/>
<rect x="24" y="85" width="45" height="1" fill="#8c8c8c"/>
<rect x="24" y="87" width="45" height="1" fill="#8c8c8c"/>
<rect x="24" y="89" width="45" height="1" fill="#8c8c8c"/>
<rect x="24" y="91" width="45" height="1" fill="#8c8c8c"/>
<rect x="24" y="93" width="45" height="1" fill="#8c8c8c"/>
<rect x="24" y="95" width="45" height="1" fill="#8c8c8c"/>
<rect x="24" y="97" width="45" height="1" fill="#8c8c8c"/>
<rect x="24" y="99" width="45" height="1" fill="#8c8c8c"/>
<rect x="24" y="101" width="45" height="1" fill="#8c8c8c"/>
<rect x="24" y="103" width="45" height="1" fill="#8c8c8c"/>
<rect x="24" y="105" width="45" height="1" fill="#8c8c8c"/>
<rect x="24" y="107" width="45" height="1" fill="#8c8c8c"/>
<rect x="25" y="72" width="1" height="37" fill="#b0b0b0"/>
<rect x="57" y="107" width="1" height="3" fill="#7a7a7a"/>
<rect x="59" y="107" width="1" height="3" fill="#7a7a7a"/>
<rect x="61" y="107" width="1" height="3" fill="#7a7a7a"/>
<rect x="63" y="107" width="1" height="3" fill="#7a7a7a"/>
<rect x="65" y="107" width="1" height="3" fill="#7a7a7a"/>
<rect x="67" y="107" width="1" height="3" fill="#7a7a7a"/>
<polyline points="26,73.5 32.5,73.5 33.7,77.6 34.5,83.4 35.6,91 36.4,99.5 40.6,93.4 46.8,91.8 52.9,91 56.8,86.5 61.4,85.3 63.7,87.2 66,91" fill="none" stroke="#e00000" stroke-width="1.4"/>
<polyline points="27.5,105.7 32,102.6 36,103.5 40.6,100.3 43.7,102.6 48.3,103.4 52.9,101 56.8,104 59,102 62,101 65,103.8" fill="none" stroke="#1a2ad8" stroke-width="1.1"/>
<path d="M20.5,121.5 A19.3,19.3 0 0 1 59.1,121.5 Z" fill="url(#gRim)"/>
<path d="M22.3,121.5 A17.5,17.5 0 0 1 57.3,121.5 Z" fill="url(#gFace)"/>
<rect x="25.0" y="120.2" width="1.6" height="1.6" fill="#555"/>
<rect x="25.5" y="116.6" width="1.6" height="1.6" fill="#555"/>
<rect x="26.9" y="113.2" width="1.6" height="1.6" fill="#555"/>
<rect x="29.1" y="110.3" width="1.6" height="1.6" fill="#555"/>
<rect x="32.0" y="108.1" width="1.6" height="1.6" fill="#555"/>
<rect x="35.4" y="106.7" width="1.6" height="1.6" fill="#555"/>
<rect x="39.0" y="106.2" width="1.6" height="1.6" fill="#555"/>
<rect x="42.6" y="106.7" width="1.6" height="1.6" fill="#555"/>
<rect x="46.0" y="108.1" width="1.6" height="1.6" fill="#555"/>
<rect x="48.9" y="110.3" width="1.6" height="1.6" fill="#555"/>
<rect x="51.1" y="113.2" width="1.6" height="1.6" fill="#555"/>
<rect x="52.5" y="116.6" width="1.6" height="1.6" fill="#555"/>
<rect x="53.0" y="120.2" width="1.6" height="1.6" fill="#555"/>
<path d="M53,111 A16,16 0 0 1 56.5,120" fill="none" stroke="#d03030" stroke-width="1.6"/>
<line x1="40" y1="120.5" x2="32" y2="110.5" stroke="#333" stroke-width="1.3"/>
<rect x="20" y="120.5" width="40" height="2" fill="#a8b0b8"/>
<ellipse cx="55" cy="206" rx="20" ry="4" fill="url(#gShad)"/>
<path d="M39,163.5 L45,162 L65,165 V203 H48 L39,199 Z" fill="url(#gSrvS)" stroke="#8a909c" stroke-width="0.6"/>
<rect x="48" y="165.5" width="17" height="37.5" fill="url(#gSrvF)" stroke="#8a909c" stroke-width="0.6"/>
<path d="M39,163.5 L45,162 L65,165 L65,166 L48,166 Z" fill="#b9bec8"/>
<rect x="49" y="172" width="15" height="0.9" fill="#9aa2b2"/>
<rect x="49" y="175" width="15" height="0.9" fill="#9aa2b2"/>
<rect x="49" y="191" width="15" height="0.9" fill="#9aa2b2"/>
<rect x="49" y="194" width="15" height="0.9" fill="#9aa2b2"/>
<rect x="49" y="197" width="15" height="0.9" fill="#9aa2b2"/>
<rect x="49" y="200" width="15" height="0.9" fill="#9aa2b2"/>
<rect x="51" y="168.5" width="4" height="1.6" fill="#22b030"/>
<rect x="59" y="178.5" width="3" height="1.4" fill="#e01010"/>
<g transform="translate(38,191) rotate(45)">
<rect x="-18.4" y="-7.25" width="36.8" height="14.5" fill="#46b046" stroke="#2a7a2a" stroke-width="0.7"/>
<rect x="-16.0" y="-5.5" width="4.2" height="7" fill="#2a3a2a"/>
<rect x="-10.4" y="-5.5" width="4.2" height="7" fill="#2a3a2a"/>
<rect x="-4.8" y="-5.5" width="4.2" height="7" fill="#2a3a2a"/>
<rect x="0.8" y="-5.5" width="4.2" height="7" fill="#2a3a2a"/>
<rect x="6.4" y="-5.5" width="4.2" height="7" fill="#2a3a2a"/>
<rect x="12.0" y="-5.5" width="4.2" height="7" fill="#2a3a2a"/>
<rect x="-17.0" y="4" width="2" height="3" fill="#e8c040"/>
<rect x="-12.4" y="4" width="2" height="3" fill="#e8c040"/>
<rect x="-7.8" y="4" width="2" height="3" fill="#e8c040"/>
<rect x="-3.2" y="4" width="2" height="3" fill="#e8c040"/>
<rect x="1.4" y="4" width="2" height="3" fill="#e8c040"/>
<rect x="6.0" y="4" width="2" height="3" fill="#e8c040"/>
<rect x="10.6" y="4" width="2" height="3" fill="#e8c040"/>
<rect x="15.2" y="4" width="2" height="3" fill="#e8c040"/>
</g>
<ellipse cx="46" cy="292" rx="22" ry="4" fill="url(#gShad)"/>
<rect x="33.5" y="246.5" width="35" height="33" fill="url(#gWin)" stroke="#a0a4a8" stroke-width="1"/>
<rect x="33.5" y="246.5" width="35" height="4" fill="#a8a8a8"/>
<rect x="34" y="250.5" width="34" height="5.5" fill="#ffffff"/>
<rect x="58" y="252.5" width="2" height="2" fill="#555"/>
<rect x="61" y="252.5" width="2" height="2" fill="#555"/>
<rect x="64.5" y="252.5" width="2" height="2" fill="#555"/>
<path d="M48,258 H56 V270 Q56,276 50,276 H45 V271 H49 Q51,271 51,269 V262 H48 Z" fill="#2a5a9c"/>
<circle cx="33" cy="280.5" r="13.8" fill="url(#gBall)" stroke="#118838" stroke-width="0.8"/>
<path d="M37.8,275 A7,7 0 1 0 37.8,286" fill="none" stroke="#a8e070" stroke-width="4.6"/>
<path d="M37.8,275 A7,7 0 1 0 37.8,286" fill="none" stroke="#ffffff" stroke-width="3"/>
<path d="M65.51,346.02 L69.61,346.00 L69.61,354.00 L65.51,353.98 L63.64,358.51 L66.55,361.39 L60.89,367.05 L58.01,364.14 L53.48,366.01 L53.50,370.11 L45.50,370.11 L45.52,366.01 L40.99,364.14 L38.11,367.05 L32.45,361.39 L35.36,358.51 L33.49,353.98 L29.39,354.00 L29.39,346.00 L33.49,346.02 L35.36,341.49 L32.45,338.61 L38.11,332.95 L40.99,335.86 L45.52,333.99 L45.50,329.89 L53.50,329.89 L53.48,333.99 L58.01,335.86 L60.89,332.95 L66.55,338.61 L63.64,341.49 Z" fill="#b8b8b8" stroke="#8c8c8c" stroke-width="0.8"/>
<path d="M69.13,349.23 L72.74,349.36 L72.74,357.04 L69.13,357.17 L67.09,362.08 L69.56,364.72 L64.12,370.16 L61.48,367.69 L56.57,369.73 L56.44,373.34 L48.76,373.34 L48.63,369.73 L43.72,367.69 L41.08,370.16 L35.64,364.72 L38.11,362.08 L36.07,357.17 L32.46,357.04 L32.46,349.36 L36.07,349.23 L38.11,344.32 L35.64,341.68 L41.08,336.24 L43.72,338.71 L48.63,336.67 L48.76,333.06 L56.44,333.06 L56.57,336.67 L61.48,338.71 L64.12,336.24 L69.56,341.68 L67.09,344.32 Z" fill="url(#gGear)" stroke="#d8b890" stroke-width="0.8"/>
<circle cx="52.6" cy="353.2" r="10" fill="#eab878"/>
<circle cx="52.6" cy="353.2" r="3.6" fill="#c89058"/>
<circle cx="52.6" cy="353.2" r="2.2" fill="#3a2414"/>
<path d="M23.4,359.4 L23.4,379.6 L42.7,369.5 Z" fill="url(#gPlay)" stroke="#1a7a3a" stroke-width="0.6"/>
<path d="M59.5,368 V362.5 A5,5 0 0 1 69.5,362.5 V368" fill="none" stroke="#7a7a7a" stroke-width="2.4"/>
<rect x="56" y="367.5" width="16.8" height="12" rx="1" fill="url(#gLock)" stroke="#c07810" stroke-width="0.8"/>
<rect x="57.5" y="370" width="14" height="0.7" fill="#d09030"/><rect x="57.5" y="373" width="14" height="0.7" fill="#d09030"/><rect x="57.5" y="376" width="14" height="0.7" fill="#d09030"/>
<rect x="63.6" y="371" width="1.6" height="4.5" fill="#5a3a10"/>
<ellipse cx="53" cy="461" rx="20" ry="4" fill="url(#gShad)"/>
<path d="M37,418.5 L43,417 L63,420 V458 H46 L37,454 Z" fill="url(#gSrvS)" stroke="#8a909c" stroke-width="0.6"/>
<rect x="46" y="420.5" width="17" height="37.5" fill="url(#gSrvF)" stroke="#8a909c" stroke-width="0.6"/>
<path d="M37,418.5 L43,417 L63,420 L63,421 L46,421 Z" fill="#b9bec8"/>
<rect x="47" y="427" width="15" height="0.9" fill="#9aa2b2"/>
<rect x="47" y="430" width="15" height="0.9" fill="#9aa2b2"/>
<rect x="47" y="446" width="15" height="0.9" fill="#9aa2b2"/>
<rect x="47" y="449" width="15" height="0.9" fill="#9aa2b2"/>
<rect x="47" y="452" width="15" height="0.9" fill="#9aa2b2"/>
<rect x="47" y="455" width="15" height="0.9" fill="#9aa2b2"/>
<rect x="49" y="423.5" width="4" height="1.6" fill="#22b030"/>
<rect x="57" y="433.5" width="3" height="1.4" fill="#e01010"/>
<path d="M19,443.6 L27,437 V440.5 H43 V447 H27 V450.6 Z" fill="url(#gArrL)" stroke="#6aa830" stroke-width="0.6"/>
<path d="M53.5,452 L45,445 V448.5 H29 V455.5 H45 V459 Z" fill="url(#gArrR)" stroke="#3a9a2a" stroke-width="0.6"/>
<ellipse cx="53" cy="547" rx="20" ry="4" fill="url(#gShad)"/>
<path d="M37,504.5 L43,503 L63,506 V544 H46 L37,540 Z" fill="url(#gSrvS)" stroke="#8a909c" stroke-width="0.6"/>
<rect x="46" y="506.5" width="17" height="37.5" fill="url(#gSrvF)" stroke="#8a909c" stroke-width="0.6"/>
<path d="M37,504.5 L43,503 L63,506 L63,507 L46,507 Z" fill="#b9bec8"/>
<rect x="47" y="513" width="15" height="0.9" fill="#9aa2b2"/>
<rect x="47" y="516" width="15" height="0.9" fill="#9aa2b2"/>
<rect x="47" y="532" width="15" height="0.9" fill="#9aa2b2"/>
<rect x="47" y="535" width="15" height="0.9" fill="#9aa2b2"/>
<rect x="47" y="538" width="15" height="0.9" fill="#9aa2b2"/>
<rect x="47" y="541" width="15" height="0.9" fill="#9aa2b2"/>
<rect x="49" y="509.5" width="4" height="1.6" fill="#22b030"/>
<rect x="57" y="519.5" width="3" height="1.4" fill="#e01010"/>
<path d="M25.5,527.5 A11.6,11.6 0 1 0 34.4,522.6" fill="none" stroke="url(#gRing)" stroke-width="7.2"/>
<path d="M23.2,522.6 L31.7,514.5 L31.5,519 L35,519 L35,526.5 L31,526.8 L32.5,529.5 Z" fill="#e8f070" stroke="#70c040" stroke-width="0.6"/>
<ellipse cx="44" cy="638" rx="26" ry="4" fill="url(#gShad)"/>
<path d="M15.3,610.4 L31,605.4 L33,609 L20,614 Z" fill="#e8c070"/>
<path d="M61.5,603 L68,605.4 L66,612 L60,610 Z" fill="#c89838"/>
<path d="M27,607 L42,610 L62,606 L64.8,618.6 L42.5,626 L20.2,621 Z" fill="#9a6a20"/>
<g transform="translate(48,606) rotate(18)"><rect x="-11" y="-18" width="22" height="26" fill="#f4f6fa" stroke="#e0a060" stroke-width="0.6"/>
<rect x="-8" y="-13" width="12" height="1" fill="#8ab0e0"/><rect x="-8" y="-10" width="12" height="1" fill="#8ab0e0"/>
<rect x="-10" y="-3" width="20" height="11" fill="url(#gPic)"/><rect x="-10" y="-4" width="20" height="1.6" fill="#4a90e0"/>
<path d="M6,-18 L11,-13 L6,-12 Z" fill="#f0a040"/></g>
<path d="M20.2,621 L42.5,626 V637.6 L20.2,630.2 Z" fill="url(#gBoxL)"/>
<path d="M42.5,626 L64.8,618.6 V630 L42.5,637.6 Z" fill="url(#gBoxR)"/>
<path d="M16.1,618.6 L21.9,612 L45,619.4 L42.5,626.9 Z" fill="#e8bd62" stroke="#c09040" stroke-width="0.5"/>
<path d="M42.5,620 L62.3,612 L68.9,617.8 L46.6,627 Z" fill="#e0b050" stroke="#b88830" stroke-width="0.5"/>
</svg>
<!-- ICONS -->
</body></html>
